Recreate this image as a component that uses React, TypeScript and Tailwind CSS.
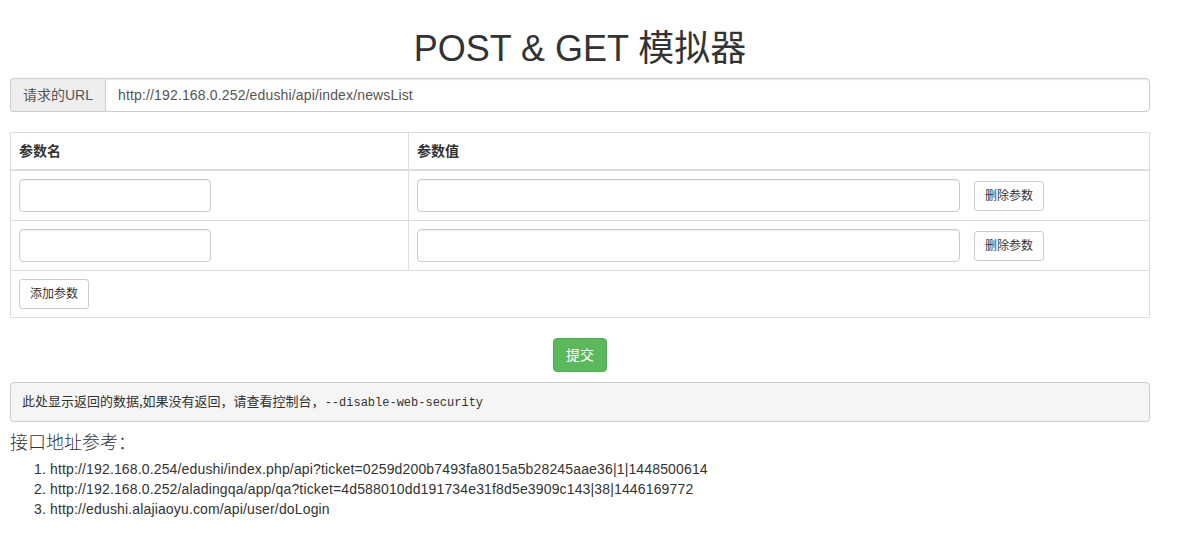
export default function App() {
  const rows = [0, 1];
  const refs = [
    'http://192.168.0.254/edushi/index.php/api?ticket=0259d200b7493fa8015a5b28245aae36|1|1448500614',
    'http://192.168.0.252/aladingqa/app/qa?ticket=4d588010dd191734e31f8d5e3909c143|38|1446169772',
    'http://edushi.alajiaoyu.com/api/user/doLogin',
  ];

  return (
    <div className="min-h-[557px] bg-white text-[#333] text-[14px] font-['Liberation_Sans','Noto_Sans_CJK_SC',sans-serif]">
      <div className="w-[1140px] ml-[10px] pt-[29px]">
        <h1 className="text-center text-[36px] leading-[40px] h-[40px] text-[#333] mb-[9px]">
          POST &amp; GET 模拟器
        </h1>

        {/* request url */}
        <div className="flex h-[34px]">
          <span className="flex items-center px-[12px] bg-[#eee] border border-[#ccc] border-r-0 rounded-l-[4px] text-[#555] text-[14px]">
            请求的URL
          </span>
          <input
            className="flex-1 px-[12px] border border-[#ccc] rounded-r-[4px] text-[#555] text-[14px] tracking-[0.15px] shadow-[inset_0_1px_1px_rgba(0,0,0,0.075)] outline-none"
            defaultValue="http://192.168.0.252/edushi/api/index/newsList"
          />
        </div>

        {/* params table */}
        <div className="mt-[20px] border border-[#ddd]">
          <div className="flex border-b-2 border-[#ddd] font-bold">
            <div className="w-[398px] p-[8px] leading-[20px] border-r border-[#ddd]">参数名</div>
            <div className="flex-1 p-[8px] leading-[20px]">参数值</div>
          </div>
          {rows.map((r) => (
            <div key={r} className={`flex ${r > 0 ? 'border-t border-[#ddd]' : ''}`}>
              <div className="w-[398px] p-[8px] border-r border-[#ddd]">
                <input className="block w-[192px] h-[33px] border border-[#ccc] rounded-[4px] shadow-[inset_0_1px_1px_rgba(0,0,0,0.075)] outline-none" />
              </div>
              <div className="flex-1 p-[8px] flex items-center">
                <input className="block w-[543px] h-[33px] border border-[#ccc] rounded-[4px] shadow-[inset_0_1px_1px_rgba(0,0,0,0.075)] outline-none" />
                <button className="ml-[14px] w-[70px] h-[30px] border border-[#ccc] rounded-[3px] bg-white text-[12px] text-[#333]">
                  删除参数
                </button>
              </div>
            </div>
          ))}
          <div className="border-t border-[#ddd] p-[8px]">
            <button className="block w-[70px] h-[30px] border border-[#ccc] rounded-[3px] bg-white text-[12px] text-[#333]">
              添加参数
            </button>
          </div>
        </div>

        <div className="flex justify-center mt-[20px]">
          <button className="w-[54px] h-[34px] bg-[#5cb85c] border border-[#4cae4c] rounded-[4px] text-white text-[14px]">
            提交
          </button>
        </div>

        <pre className="mt-[10px] p-[9px] pl-[11px] leading-[18px] bg-[#f5f5f5] border border-[#ccc] rounded-[4px] text-[13px] text-[#333] font-['Liberation_Mono','Noto_Sans_CJK_SC',monospace]">
          <span className="font-['Noto_Sans_CJK_SC',sans-serif]">此处显示返回的数据,如果没有返回，请查看控制台，</span>
          <span className="text-[12px]">--disable-web-security</span>
        </pre>

        <h4 className="mt-[10px] text-[18px] leading-[22px] font-light">接口地址参考：</h4>
        <ol className="list-decimal pl-[40px] mt-[5px] leading-[20px] text-[14px] tracking-[0.15px]">
          {refs.map((u) => (
            <li key={u}>{u}</li>
          ))}
        </ol>
      </div>
    </div>
  );
}
